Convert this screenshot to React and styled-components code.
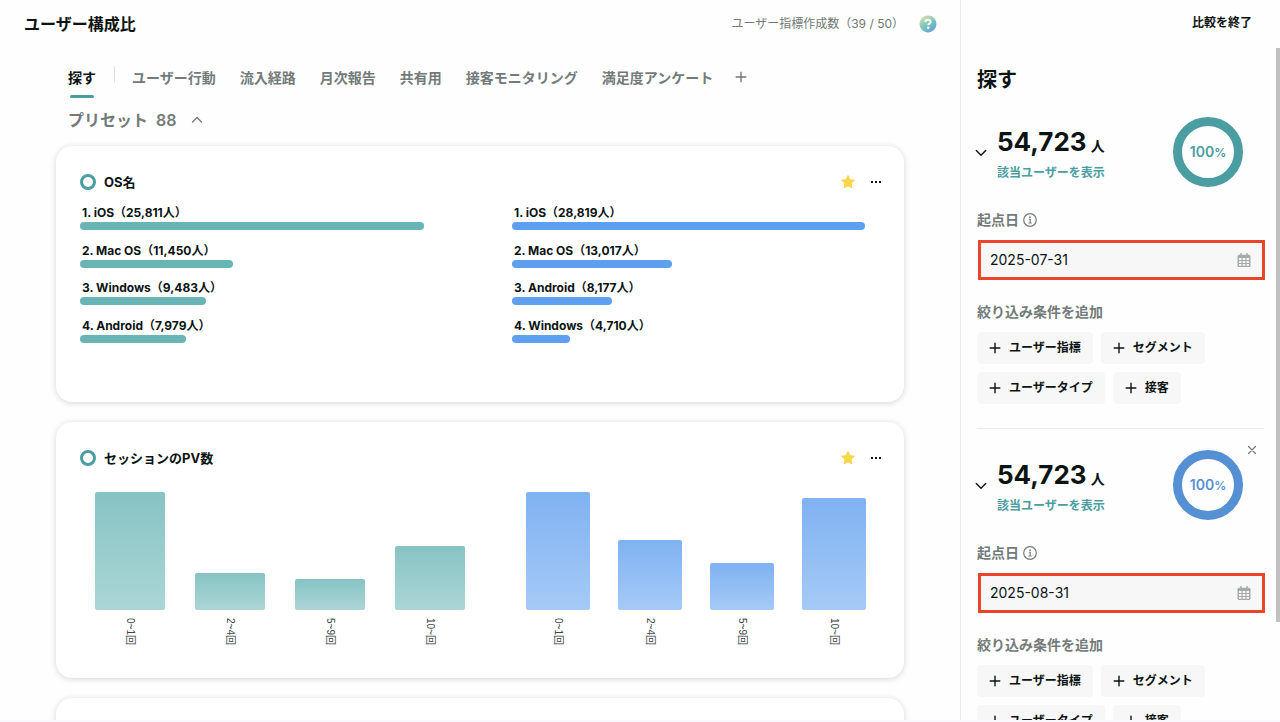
import React from 'react';
import styled, { createGlobalStyle } from 'styled-components';

const TEAL = '#4a9da0';
const BLUE = '#5590d4';
const OS_SCALE = 30013;

const GlobalStyle = createGlobalStyle`
  * {
    box-sizing: border-box;
  }

  body {
    margin: 0;
    background: #f8f8fd;
    color: #0b1413;
    font-family: Inter, 'Noto Sans CJK JP', sans-serif;
    font-size: 14px;
    -webkit-font-smoothing: antialiased;
  }

  button {
    padding: 0;
    border: 0;
    background: none;
    color: inherit;
    font: inherit;
    cursor: pointer;
  }

  h1, h2, h3, ol, ul {
    margin: 0;
    padding: 0;
    list-style: none;
  }

  svg {
    display: block;
    flex: none;
  }
`;

const Shell = styled.div`
  display: flex;
  height: 100vh;
  padding-bottom: 2px;
  overflow: hidden;
`;

const Main = styled.main`
  flex: 1;
  min-width: 0;
  overflow: hidden;
  background: #fefefe;
`;

const TopBar = styled.header`
  display: flex;
  align-items: center;
  height: 48px;
  padding: 0 23px 0 24px;
`;

const PageTitle = styled.h1`
  flex: 1;
  font-size: 16px;
  line-height: 24px;
  font-weight: 700;
`;

const Quota = styled.span`
  margin-right: 15px;
  color: #6f7877;
  font-size: 12px;
  line-height: 16px;
`;

const Content = styled.div`
  padding: 12px 56px 0;
`;

const TabBar = styled.nav`
  display: flex;
  align-items: flex-start;
`;

const Tab = styled.button`
  display: flex;
  flex-flow: column nowrap;
  align-items: center;
  padding: 8px 12px 0;
  color: ${(props) => (props.$active ? '#0b1413' : '#737b7a')};
  font-weight: 700;
  line-height: 20px;
  white-space: nowrap;

  &::after {
    content: '';
    width: 24px;
    height: 3px;
    margin-top: 7px;
    border-radius: 2px;
    background: ${(props) => (props.$active ? TEAL : 'transparent')};
  }
`;

const TabDivider = styled.span`
  width: 1px;
  height: 16px;
  margin: 6px 5px 0 6px;
  background: #dcdfdf;
`;

const AddTab = styled.button`
  display: flex;
  justify-content: center;
  width: 32px;
  padding-top: 11px;
  color: #6f7877;
`;

const PresetToggle = styled.button`
  display: flex;
  align-items: center;
  gap: 8px;
  margin: 12px 0 16px 12px;
  color: #737b7a;
  font-size: 16px;
  font-weight: 600;
  line-height: 20px;

  svg {
    margin-left: 6px;
  }
`;

const CardList = styled.div`
  display: flex;
  flex-flow: column nowrap;
  gap: 20px;
`;

const CardBox = styled.section`
  height: 256px;
  padding: 24px;
  border-radius: 16px;
  background: #fff;
  box-shadow: 0 1px 6px rgba(0, 0, 0, 0.16);
`;

const CardHeader = styled.div`
  display: flex;
  align-items: center;
  gap: 12px;
  height: 24px;
  margin-right: -4px;
`;

const Dot = styled.span`
  width: 16px;
  height: 16px;
  margin-right: -4px;
  border: 3px solid ${TEAL};
  border-radius: 50%;
`;

const CardTitle = styled.h2`
  flex: 1;
  font-size: 13px;
  line-height: 20px;
  font-weight: 700;
`;

const Compare = styled.div`
  display: grid;
  grid-template-columns: 400fr 368fr;
  gap: 32px;
`;

const Ranking = styled.ol`
  display: flex;
  flex-flow: column nowrap;
  justify-content: space-between;
  height: 139px;
  margin-top: 10px;
`;

const RankLabel = styled.div`
  padding-left: 2px;
  font-size: 12px;
  line-height: 18px;
  font-weight: 700;
`;

const RankBar = styled.div`
  height: 8px;
  border-radius: 4px;
  background: ${(props) => (props.$blue ? '#5f9ff0' : '#69b4b5')};
`;

const Histogram = styled.ul`
  display: grid;
  grid-template-columns: repeat(4, 1fr);
  margin-top: 20px;
`;

const Column = styled.li`
  display: flex;
  flex-flow: column nowrap;
  align-items: center;
  justify-content: flex-end;
`;

const ColumnPlot = styled.div`
  display: flex;
  align-items: flex-end;
  width: 70%;
  height: 120px;
`;

const ColumnBar = styled.div`
  width: 100%;
  border-radius: 2px;
  background: ${(props) =>
    props.$blue
      ? 'linear-gradient(#7fb2f2, #a5caf6)'
      : 'linear-gradient(#87c3c4, #abd6d6)'};
`;

const ColumnLabel = styled.span`
  height: 32px;
  margin-top: 8px;
  color: #3c4444;
  font-family: 'Liberation Sans', 'Noto Sans CJK JP', sans-serif;
  font-size: 10px;
  line-height: 12px;
  writing-mode: vertical-rl;
  text-orientation: sideways;
`;

const Sidebar = styled.aside`
  display: flex;
  flex-flow: column nowrap;
  width: 320px;
  border-left: 1px solid #ececec;
  background: #fefefe;
`;

const SidebarTop = styled.div`
  display: flex;
  flex: none;
  align-items: center;
  justify-content: flex-end;
  height: 48px;
  padding-right: 28px;
`;

const EndCompare = styled.button`
  padding-bottom: 2px;
  font-size: 12px;
  line-height: 16px;
  font-weight: 700;
`;

const SidebarScroll = styled.div`
  display: flex;
  flex: 1;
  min-height: 0;
  overflow: hidden;
`;

const SidebarBody = styled.div`
  flex: 1;
  padding: 16px 12px 0 16px;
`;

const ScrollThumb = styled.div`
  width: 4px;
  height: 85.4%;
  background: #c1c1c1;
`;

const SidebarTitle = styled.h2`
  font-size: 20px;
  line-height: 32px;
  font-weight: 700;
`;

const GroupBox = styled.section`
  position: relative;
  padding: 16px 0 24px;
  border-bottom: 1px solid #ececec;
`;

const CloseGroup = styled.button`
  position: absolute;
  top: 15px;
  right: 6px;
  color: #737b7a;
`;

const Summary = styled.div`
  display: flex;
  align-items: center;
  height: 80px;
  padding-right: 21px;
`;

const Fold = styled.button`
  margin: 2px 10px 0 -2px;
`;

const Total = styled.div`
  flex: 1;
  padding-top: 4px;
`;

const Count = styled.div`
  font-size: 26px;
  line-height: 34px;
  font-weight: 700;

  small {
    margin-left: 4px;
    font-size: 14px;
  }
`;

const ShowUsers = styled.a`
  display: block;
  color: ${TEAL};
  font-size: 12px;
  line-height: 20px;
  font-weight: 600;
  text-decoration: none;
`;

const Donut = styled.div`
  display: flex;
  align-items: baseline;
  justify-content: center;
  width: 70px;
  height: 70px;
  border: 9px solid ${(props) => props.$color};
  border-radius: 50%;
  color: ${(props) => props.$color};
  font-size: 14px;
  line-height: 52px;
  font-weight: 600;

  small {
    font-size: 12px;
  }
`;

const FieldTitle = styled.div`
  display: flex;
  align-items: center;
  gap: 4px;
  margin: ${(props) => (props.$first ? '18px 0 10px' : '22px 0 10px')};
  color: #737b7a;
  font-size: 14px;
  line-height: 20px;
  font-weight: 600;
`;

const DateField = styled.div`
  display: flex;
  align-items: center;
  height: 40px;
  margin: 0 -1px 0 1px;
  padding: 0 11px 0 9px;
  border: 3px solid #ea4529;
  background: #f7f7f7;
`;

const DateInput = styled.input`
  flex: 1;
  min-width: 0;
  padding: 0 0 1px;
  border: 0;
  outline: 0;
  background: none;
  color: #0b1413;
  font: inherit;
`;

const Chips = styled.div`
  display: flex;
  flex-flow: row wrap;
  gap: 8px;
`;

const Chip = styled.button`
  display: flex;
  align-items: center;
  gap: 8px;
  height: 32px;
  padding: 0 12px 1px;
  border-radius: 4px;
  background: #f7f7f7;
  font-size: 12px;
  line-height: 16px;
  font-weight: 700;
`;

const Plus = ({ size = 12 }) => (
  <svg width={size} height={size} viewBox="0 0 12 12" stroke="currentColor" strokeWidth="1.4">
    <path d="M6 1.200v9.600M1.200 6h9.600" fill="none" strokeLinecap="round" />
  </svg>
);

const Chevron = ({ up }) => (
  <svg width="12" height="12" viewBox="0 0 12 12" fill="none" stroke="currentColor">
    <path
      d={up ? 'M1.500 8 6 3.500 10.500 8' : 'M1.300 3.500 6 8.200l4.700-4.700'}
      strokeWidth="1.4"
      strokeLinecap="round"
    />
  </svg>
);

const Star = () => (
  <svg width="16" height="16" viewBox="0 0 16 16">
    <path
      d="M8 1.500l1.900 4.200 4.600.5-3.400 3.100.9 4.600L8 11.800l-4 2.100.9-4.600L1.500 6.200l4.600-.5z"
      fill="#f9d548"
      stroke="#f9d548"
      strokeLinejoin="round"
    />
  </svg>
);

const More = () => (
  <svg width="16" height="16" viewBox="0 0 16 16" fill="#0b1413">
    <rect x="3" y="7" width="2" height="2" />
    <rect x="7" y="7" width="2" height="2" />
    <rect x="11" y="7" width="2" height="2" />
  </svg>
);

const Help = () => (
  <svg width="18" height="18" viewBox="0 0 18 18">
    <defs>
      <linearGradient id="help" x1="0.2" y1="0" x2="0.8" y2="1">
        <stop offset="0" stopColor="#e3dcaa" />
        <stop offset="0.5" stopColor="#78c8bd" />
        <stop offset="1" stopColor="#6a9ad8" />
      </linearGradient>
    </defs>
    <circle cx="9" cy="9" r="8.500" fill="url(#help)" />
    <path
      d="M6.400 7.100c.1-1.400 1.100-2.300 2.600-2.300s2.600.9 2.600 2.100c0 1.700-2.400 1.700-2.400 3.400"
      fill="none"
      stroke="#fff"
      strokeWidth="1.900"
    />
    <circle cx="9.200" cy="12.700" r="1.200" fill="#fff" />
  </svg>
);

const Info = () => (
  <svg width="14" height="14" viewBox="0 0 14 14" fill="none" stroke="#737b7a">
    <circle cx="7" cy="7" r="6.300" strokeWidth="1.200" />
    <path d="M5.800 6.200H7.200V10M5.500 10h3.200" strokeWidth="1.100" />
    <circle cx="7" cy="4.200" r="0.900" fill="#737b7a" stroke="none" />
  </svg>
);

const Calendar = () => (
  <svg width="14" height="14" viewBox="0 0 14 14">
    <path
      d="M4 .8v2M10 .8v2"
      stroke="#a5abaa"
      strokeWidth="1.600"
      strokeLinecap="round"
    />
    <rect x="0.500" y="1.700" width="13" height="12.300" rx="1.500" fill="#a5abaa" />
    <path
      d="M2 5h2.500v2H2zM5.700 5h2.600v2H5.700zM9.500 5H12v2H9.500zM2 8h2.500v2H2zM5.700 8h2.600v2H5.700zM9.500 8H12v2H9.500zM2 11h2.500v1.700H2zM5.700 11h2.600v1.700H5.700zM9.500 11H12v1.700H9.500z"
      fill="#f7f7f7"
    />
  </svg>
);

const Close = () => (
  <svg width="12" height="12" viewBox="0 0 12 12" stroke="currentColor" strokeWidth="1.200">
    <path d="M2.500 2.500l7 7M9.500 2.500l-7 7" strokeLinecap="round" />
  </svg>
);

const tabs = ['ユーザー行動', '流入経路', '月次報告', '共有用', '接客モニタリング', '満足度アンケート'];

const osLeft = [
  ['iOS', 25811],
  ['Mac OS', 11450],
  ['Windows', 9483],
  ['Android', 7979],
];

const osRight = [
  ['iOS', 28819],
  ['Mac OS', 13017],
  ['Android', 8177],
  ['Windows', 4710],
];

const pvLeft = [
  ['0~1回', 98],
  ['2~4回', 31],
  ['5~9回', 25.5],
  ['10~回', 53.5],
];

const pvRight = [
  ['0~1回', 98.5],
  ['2~4回', 58],
  ['5~9回', 39],
  ['10~回', 93.5],
];

const filters = ['ユーザー指標', 'セグメント', 'ユーザータイプ', '接客'];

const Card = ({ title, children }) => (
  <CardBox>
    {title && (
      <CardHeader>
        <Dot />
        <CardTitle>{title}</CardTitle>
        <button type="button" aria-label="お気に入り">
          <Star />
        </button>
        <button type="button" aria-label="メニュー">
          <More />
        </button>
      </CardHeader>
    )}
    {children}
  </CardBox>
);

const OsRanking = ({ items, blue }) => (
  <Ranking>
    {items.map(([name, users], i) => (
      <li key={name}>
        <RankLabel>{`${i + 1}. ${name}（${users.toLocaleString('en-US')}人）`}</RankLabel>
        <RankBar $blue={blue} style={{ width: `${(users / OS_SCALE) * 100}%` }} />
      </li>
    ))}
  </Ranking>
);

const PvHistogram = ({ items, blue }) => (
  <Histogram>
    {items.map(([label, height]) => (
      <Column key={label}>
        <ColumnPlot>
          <ColumnBar $blue={blue} style={{ height: `${height}%` }} />
        </ColumnPlot>
        <ColumnLabel>{label}</ColumnLabel>
      </Column>
    ))}
  </Histogram>
);

const Group = ({ id, date, color, closable }) => (
  <GroupBox>
    {closable && (
      <CloseGroup type="button" aria-label="閉じる">
        <Close />
      </CloseGroup>
    )}
    <Summary>
      <Fold type="button" aria-label="開閉">
        <Chevron />
      </Fold>
      <Total>
        <Count>
          54,723
          <small>人</small>
        </Count>
        <ShowUsers href="#users">該当ユーザーを表示</ShowUsers>
      </Total>
      <Donut $color={color}>
        100<small>%</small>
      </Donut>
    </Summary>
    <FieldTitle as="label" htmlFor={id} $first>
      起点日
      <Info />
    </FieldTitle>
    <DateField>
      <DateInput id={id} type="text" defaultValue={date} />
      <Calendar />
    </DateField>
    <FieldTitle>絞り込み条件を追加</FieldTitle>
    <Chips>
      {filters.map((name) => (
        <Chip type="button" key={name}>
          <Plus />
          {name}
        </Chip>
      ))}
    </Chips>
  </GroupBox>
);

const App = () => {
  return (
    <>
      <GlobalStyle />
      <Shell>
        <Main>
          <TopBar>
            <PageTitle>ユーザー構成比</PageTitle>
            <Quota>ユーザー指標作成数（39 / 50）</Quota>
            <button type="button" aria-label="ヘルプ">
              <Help />
            </button>
          </TopBar>
          <Content>
            <TabBar>
              <Tab type="button" $active>
                探す
              </Tab>
              <TabDivider />
              {tabs.map((name) => (
                <Tab type="button" key={name}>
                  {name}
                </Tab>
              ))}
              <AddTab type="button" aria-label="タブを追加">
                <Plus />
              </AddTab>
            </TabBar>
            <PresetToggle type="button">
              <span>プリセット</span>
              <span>88</span>
              <Chevron up />
            </PresetToggle>
            <CardList>
              <Card title="OS名">
                <Compare>
                  <OsRanking items={osLeft} />
                  <OsRanking items={osRight} blue />
                </Compare>
              </Card>
              <Card title="セッションのPV数">
                <Compare>
                  <PvHistogram items={pvLeft} />
                  <PvHistogram items={pvRight} blue />
                </Compare>
              </Card>
              <Card />
            </CardList>
          </Content>
        </Main>
        <Sidebar>
          <SidebarTop>
            <EndCompare type="button">比較を終了</EndCompare>
          </SidebarTop>
          <SidebarScroll>
            <SidebarBody>
              <SidebarTitle>探す</SidebarTitle>
              <Group id="start-a" date="2025-07-31" color={TEAL} />
              <Group id="start-b" date="2025-08-31" color={BLUE} closable />
            </SidebarBody>
            <ScrollThumb />
          </SidebarScroll>
        </Sidebar>
      </Shell>
    </>
  );
};

export default App;
